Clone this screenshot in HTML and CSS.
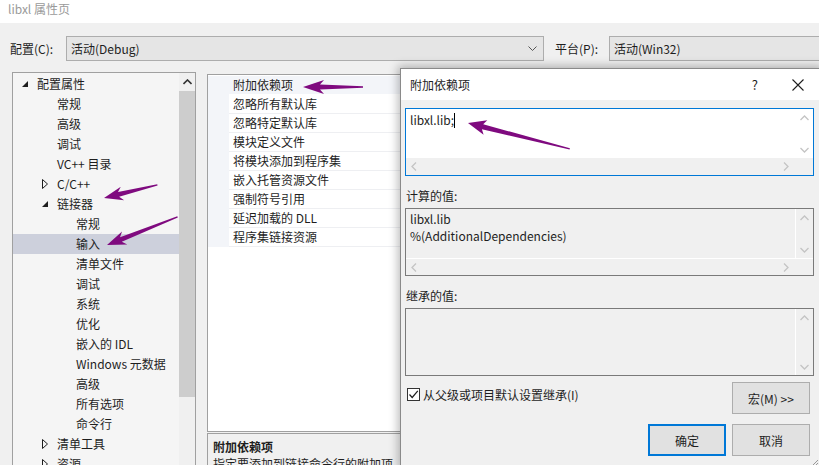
FILE: index.html
```html
<!DOCTYPE html>
<html lang="zh-CN">
  <head>
    <meta charset="UTF-8" />
    <title>libxl 属性页</title>
    <link rel="stylesheet" href="styles.css">
  </head>

  <body>
    <div class="titlebar">libxl 属性页</div>

    <div class="toolbar">
      <span class="tb-label">配置(C):</span>
      <div class="combo combo-config">
        <span>活动(Debug)</span>
        <svg class="combo-arrow" width="9" height="6" viewBox="0 0 9 6"><polyline points="0.5,0.5 4.5,4.5 8.5,0.5" fill="none" stroke="#555" stroke-width="1"/></svg>
      </div>
      <span class="tb-label tb-platform">平台(P):</span>
      <div class="combo combo-platform"><span>活动(Win32)</span></div>
    </div>

    <div class="main">
      <!-- 左侧树 -->
      <div class="tree">
        <div class="tree-list">
          <div class="trow l1"><span class="tw"><svg width="6" height="6" viewBox="0 0 6 6"><polygon points="6,0 6,6 0,6" fill="#1e1e1e"/></svg></span>配置属性</div>
          <div class="trow l2"><span class="tw"></span>常规</div>
          <div class="trow l2"><span class="tw"></span>高级</div>
          <div class="trow l2"><span class="tw"></span>调试</div>
          <div class="trow l2"><span class="tw"></span>VC++ 目录</div>
          <div class="trow l2"><span class="tw"><svg width="6" height="10" viewBox="0 0 6 10"><polygon points="0.5,0.5 5.5,5 0.5,9.5" fill="none" stroke="#1e1e1e" stroke-width="1"/></svg></span>C/C++</div>
          <div class="trow l2"><span class="tw"><svg width="6" height="6" viewBox="0 0 6 6"><polygon points="6,0 6,6 0,6" fill="#1e1e1e"/></svg></span>链接器</div>
          <div class="trow l3"><span class="tw"></span>常规</div>
          <div class="trow l3 selected"><span class="tw"></span>输入</div>
          <div class="trow l3"><span class="tw"></span>清单文件</div>
          <div class="trow l3"><span class="tw"></span>调试</div>
          <div class="trow l3"><span class="tw"></span>系统</div>
          <div class="trow l3"><span class="tw"></span>优化</div>
          <div class="trow l3"><span class="tw"></span>嵌入的 IDL</div>
          <div class="trow l3"><span class="tw"></span>Windows 元数据</div>
          <div class="trow l3"><span class="tw"></span>高级</div>
          <div class="trow l3"><span class="tw"></span>所有选项</div>
          <div class="trow l3"><span class="tw"></span>命令行</div>
          <div class="trow l2"><span class="tw"><svg width="6" height="10" viewBox="0 0 6 10"><polygon points="0.5,0.5 5.5,5 0.5,9.5" fill="none" stroke="#1e1e1e" stroke-width="1"/></svg></span>清单工具</div>
          <div class="trow l2"><span class="tw"><svg width="6" height="10" viewBox="0 0 6 10"><polygon points="0.5,0.5 5.5,5 0.5,9.5" fill="none" stroke="#1e1e1e" stroke-width="1"/></svg></span>资源</div>
        </div>
        <div class="tree-scroll">
          <div class="sb-btn">
            <svg width="9" height="6" viewBox="0 0 9 6"><polyline points="0.5,5 4.5,1 8.5,5" fill="none" stroke="#333" stroke-width="1.6"/></svg>
          </div>
          <div class="sb-thumb"></div>
        </div>
      </div>

      <!-- 属性网格 -->
      <div class="props">
        <div class="grid">
          <div class="prow current"><span class="pcat"></span><span class="pname">附加依赖项</span></div>
          <div class="prow"><span class="pcat"></span><span class="pname">忽略所有默认库</span></div>
          <div class="prow"><span class="pcat"></span><span class="pname">忽略特定默认库</span></div>
          <div class="prow"><span class="pcat"></span><span class="pname">模块定义文件</span></div>
          <div class="prow"><span class="pcat"></span><span class="pname">将模块添加到程序集</span></div>
          <div class="prow"><span class="pcat"></span><span class="pname">嵌入托管资源文件</span></div>
          <div class="prow"><span class="pcat"></span><span class="pname">强制符号引用</span></div>
          <div class="prow"><span class="pcat"></span><span class="pname">延迟加载的 DLL</span></div>
          <div class="prow"><span class="pcat"></span><span class="pname">程序集链接资源</span></div>
        </div>
        <div class="desc">
          <div class="desc-title">附加依赖项</div>
          <div class="desc-text">指定要添加到链接命令行的附加项</div>
        </div>
      </div>
    </div>

    <!-- 弹出的对话框 -->
    <div class="dialog">
      <div class="dlg-title">
        <span class="dlg-caption">附加依赖项</span>
        <span class="dlg-help">?</span>
        <svg class="dlg-close" width="12" height="12" viewBox="0 0 12 12"><path d="M0.5 0.5 L11.5 11.5 M11.5 0.5 L0.5 11.5" stroke="#1e1e1e" stroke-width="1.1"/></svg>
      </div>

      <div class="dlg-body">
        <div class="mbox edit">
          <div class="mbox-main">
            <div class="mbox-text">libxl.lib;<span class="caret"></span></div>
            <div class="vbar">
              <svg width="9" height="6" viewBox="0 0 9 6"><polyline points="0.5,5 4.5,1 8.5,5" fill="none" stroke="#c4c4c4" stroke-width="1.3"/></svg>
              <svg width="9" height="6" viewBox="0 0 9 6"><polyline points="0.5,1 4.5,5 8.5,1" fill="none" stroke="#c4c4c4" stroke-width="1.3"/></svg>
            </div>
          </div>
          <div class="hbar">
            <svg width="6" height="9" viewBox="0 0 6 9"><polyline points="5,0.5 1,4.5 5,8.5" fill="none" stroke="#c4c4c4" stroke-width="1.3"/></svg>
            <svg width="6" height="9" viewBox="0 0 6 9"><polyline points="1,0.5 5,4.5 1,8.5" fill="none" stroke="#c4c4c4" stroke-width="1.3"/></svg>
          </div>
        </div>

        <div class="dlabel">计算的值:</div>
        <div class="mbox readonly">
          <div class="mbox-main">
            <div class="mbox-text">libxl.lib<br>%(AdditionalDependencies)</div>
            <div class="vbar">
              <svg width="9" height="6" viewBox="0 0 9 6"><polyline points="0.5,5 4.5,1 8.5,5" fill="none" stroke="#c4c4c4" stroke-width="1.3"/></svg>
              <svg width="9" height="6" viewBox="0 0 9 6"><polyline points="0.5,1 4.5,5 8.5,1" fill="none" stroke="#c4c4c4" stroke-width="1.3"/></svg>
            </div>
          </div>
          <div class="hbar">
            <svg width="6" height="9" viewBox="0 0 6 9"><polyline points="5,0.5 1,4.5 5,8.5" fill="none" stroke="#c4c4c4" stroke-width="1.3"/></svg>
            <svg width="6" height="9" viewBox="0 0 6 9"><polyline points="1,0.5 5,4.5 1,8.5" fill="none" stroke="#c4c4c4" stroke-width="1.3"/></svg>
          </div>
        </div>

        <div class="dlabel">继承的值:</div>
        <div class="mbox readonly">
          <div class="mbox-main">
            <div class="mbox-text"></div>
            <div class="vbar">
              <svg width="9" height="6" viewBox="0 0 9 6"><polyline points="0.5,5 4.5,1 8.5,5" fill="none" stroke="#c4c4c4" stroke-width="1.3"/></svg>
              <svg width="9" height="6" viewBox="0 0 9 6"><polyline points="0.5,1 4.5,5 8.5,1" fill="none" stroke="#c4c4c4" stroke-width="1.3"/></svg>
            </div>
          </div>
        </div>

        <div class="opt-row">
          <label class="check">
            <span class="check-box"><svg width="11" height="11" viewBox="0 0 11 11"><polyline points="1.5,5.5 4.2,8.5 9.8,1.8" fill="none" stroke="#1e1e1e" stroke-width="1.2"/></svg></span>
            从父级或项目默认设置继承(I)
          </label>
          <button class="btn">宏(M) &gt;&gt;</button>
        </div>

        <div class="btn-row">
          <button class="btn btn-default">确定</button>
          <button class="btn">取消</button>
        </div>
      </div>

      <svg class="grip" width="7" height="7" viewBox="0 0 7 7"><path d="M6 1 L1 6 M6 4 L4 6" stroke="#999" stroke-width="1"/></svg>
    </div>

    <!-- 截图上的标注箭头 -->
    <svg class="marks" width="819" height="465" viewBox="0 0 819 465">
      <g fill="#7f0a7f">
        <polygon transform="translate(303,87) rotate(0)" points="0,0 21,-7 17,-2.4 60,-0.7 60,0.7 17,2.4 21,7"/>
        <polygon transform="translate(104,198) rotate(-13.8)" points="0,0 19,-7 15,-2.4 55,-0.7 55,0.7 15,2.4 19,7"/>
        <polygon transform="translate(107,245) rotate(-21.8)" points="0,0 19,-7 15,-2.4 76,-0.7 76,0.7 15,2.4 19,7"/>
        <polygon transform="translate(468,123) rotate(14.3)" points="0,0 18,-7.5 15,-2.6 105,-0.7 105,0.7 15,2.6 18,7.5"/>
      </g>
    </svg>
  </body>
</html>
```

FILE: styles.css
```css
* {
  box-sizing: border-box;
  margin: 0;
  padding: 0;
}

body {
  width: 819px;
  height: 465px;
  overflow: hidden;
  position: relative;
  background-color: #f0f0f0;
  color: #1e1e1e;
  font-family: "Noto Sans CJK SC", "Noto Sans", sans-serif;
  font-size: 12px;
  line-height: 17px;
}

.titlebar {
  height: 23px;
  background: #fff;
  color: #9a9a9a;
  padding-left: 8px;
  line-height: 18px;
}

/* 工具栏 */
.toolbar {
  height: 45px;
  padding: 6px 0 0 10px;
  display: flex;
  align-items: center;
}

.tb-label {
  width: 56px;
}

.tb-platform {
  margin-left: 11px;
  width: 54px;
}

.combo {
  height: 25px;
  background: #e5e5e5;
  border: 1px solid #adadad;
  display: flex;
  align-items: center;
  padding-left: 4px;
}

.combo-config {
  width: 478px;
  justify-content: space-between;
  padding-right: 6px;
}

.combo-platform {
  flex: 1;
  border-right: none;
}

/* 主体 */
.main {
  display: flex;
  padding: 4px 0 0 12px;
}

.tree {
  width: 184px;
  height: 400px;
  border: 1px solid #a0a0a0;
  background: #f5f5f5;
  display: flex;
}

.tree-list {
  flex: 1;
  padding-top: 1px;
}

.trow {
  height: 20px;
  line-height: 20px;
  display: flex;
  align-items: center;
  white-space: nowrap;
}

.trow.l1 { padding-left: 9px; }
.trow.l2 { padding-left: 29px; }
.trow.l3 { padding-left: 48px; }

.trow.selected {
  background: #cdd0dc;
}

.tw {
  width: 15px;
  height: 20px;
  display: flex;
  align-items: center;
}

.tree-scroll {
  width: 16px;
  background: #f0f0f0;
}

.sb-btn {
  height: 18px;
  display: flex;
  align-items: center;
  justify-content: center;
}

.sb-thumb {
  height: 306px;
  background: #cdcdcd;
}

/* 属性网格 */
.props {
  margin: 2px 0 0 11px;
  width: 420px;
}

.grid {
  height: 358px;
  background: #fff;
  border: 1px solid #a0a0a0;
  padding-top: 1px;
}

.prow {
  height: 19px;
  display: flex;
}

.pcat {
  width: 21px;
  background: #f3f5f9;
}

.pname {
  flex: 1;
  padding-left: 4px;
  line-height: 18px;
  border-bottom: 1px solid #eeeff2;
}

.prow.current .pname {
  background: #f3f5f9;
  border-bottom-color: #fff;
}

.desc {
  height: 40px;
  margin-top: 1px;
  border: 1px solid #a0a0a0;
  padding: 4px 5px;
}

.desc-title {
  font-weight: bold;
  line-height: 18px;
}

.desc-text {
  line-height: 16px;
}

/* 对话框 */
.dialog {
  position: absolute;
  left: 400px;
  top: 68px;
  width: 421px;
  height: 400px;
  background: #f0f0f0;
  border: 1px solid #8a8a8a;
  box-shadow: 0 0 9px 2px rgba(0, 0, 0, 0.28);
}

.dlg-title {
  height: 31px;
  background: #fff;
  display: flex;
  align-items: center;
  padding-left: 9px;
}

.dlg-caption {
  flex: 1;
}

.dlg-help {
  font-size: 13px;
  margin-right: 34px;
}

.dlg-close {
  margin-right: 16px;
}

.dlg-body {
  padding: 8px 6px 0 4px;
}

.mbox {
  height: 68px;
  border: 1px solid #7a7a7a;
  display: flex;
  flex-direction: column;
}

.mbox.edit {
  border-color: #0078d7;
  background: #fff;
}

.mbox-main {
  flex: 1;
  display: flex;
}

.mbox-text {
  flex: 1;
  padding: 2px 4px;
  white-space: nowrap;
}

.readonly .mbox-text {
  padding-top: 1px;
}

.caret {
  display: inline-block;
  width: 1px;
  height: 15px;
  background: #000;
  vertical-align: -3px;
}

.vbar {
  width: 18px;
  display: flex;
  flex-direction: column;
  justify-content: space-between;
  align-items: center;
  padding: 6px 0 5px;
}

.readonly .vbar {
  border-left: 1px solid #fff;
}

.hbar {
  height: 17px;
  background: #f0f0f0;
  display: flex;
  align-items: center;
  justify-content: space-between;
  padding: 0 24px 0 5px;
}

.readonly .hbar {
  border-top: 1px solid #fff;
}

.dlabel {
  margin: 11px 0 4px 1px;
  height: 17px;
}

.opt-row {
  display: flex;
  justify-content: space-between;
  align-items: flex-start;
  margin-top: 6px;
  padding-right: 4px;
}

.check {
  display: flex;
  align-items: center;
  margin-top: 4px;
  padding-left: 2px;
  gap: 3px;
}

.check-box {
  width: 13px;
  height: 13px;
  border: 1px solid #333;
  background: #fff;
  display: flex;
  align-items: center;
  justify-content: center;
}

.btn {
  width: 78px;
  height: 32px;
  background: #e1e1e1;
  border: 1px solid #adadad;
  font-family: inherit;
  font-size: 12px;
  color: #1e1e1e;
}

.btn-default {
  border: 2px solid #0078d7;
}

.btn-row {
  display: flex;
  justify-content: flex-end;
  gap: 6px;
  margin-top: 10px;
  padding-right: 4px;
}

.grip {
  position: absolute;
  right: 1px;
  bottom: 1px;
}

.marks {
  position: absolute;
  left: 0;
  top: 0;
  pointer-events: none;
}
```
